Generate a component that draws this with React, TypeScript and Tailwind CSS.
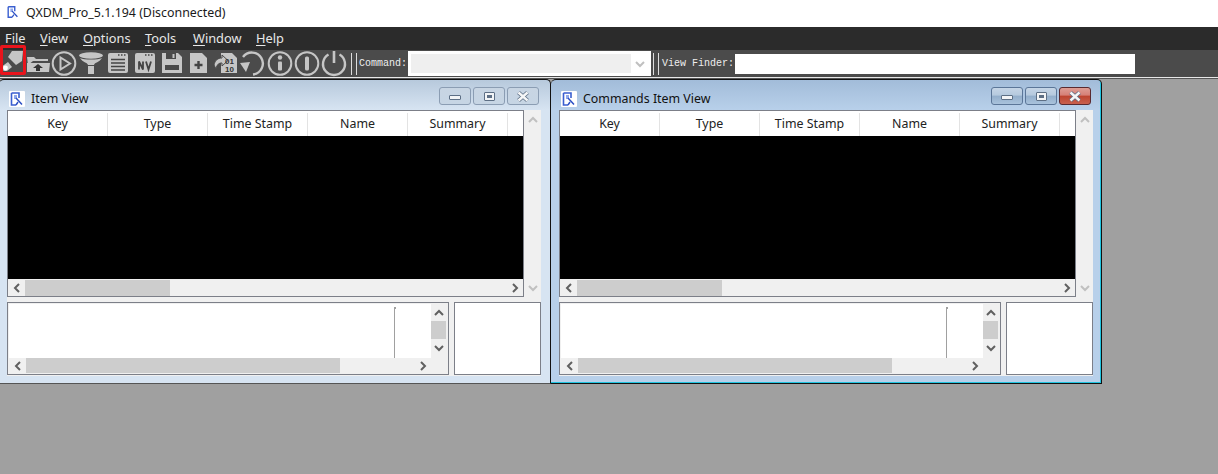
import React from "react";

const F = "[font-family:'Noto_Sans','Open_Sans',sans-serif]";

function AppLogo({ size = 16 }: { size?: number }) {
  return (
    <svg width={size} height={size} viewBox="0 0 16 16" className="shrink-0">
      <rect x="0" y="0" width="16" height="16" rx="1" fill="#ffffff" />
      <path d="M2.5 2 H10 V7 M2.5 2 V14 H7" fill="none" stroke="#3a5fd0" strokeWidth="1.6" />
      <path d="M5 4 H8 V8 H5 Z" fill="#8fa8ea" />
      <path d="M7 7 L13 13.5 M9 11 L7 14" fill="none" stroke="#2d50c4" strokeWidth="1.5" />
    </svg>
  );
}

const ic = "#c6c6c6";

function ToolIcon({ w, children }: { w: number; children: React.ReactNode }) {
  return (
    <svg width={w} height="27" viewBox={`0 0 ${w} 27`} className="shrink-0 overflow-visible">
      {children}
    </svg>
  );
}

function Toolbar() {
  return (
    <div className="flex items-center">
      <ToolIcon w={26}>
        <path d="M12 1 H23 L22 11 L16 15 L8 7 Z" fill={ic} />
        <path d="M8 12 L12 17 L7 21 H3.5 L2.5 16 Z" fill={ic} />
        <circle cx="5.5" cy="18" r="2.4" fill="#fff" />
      </ToolIcon>
      <ToolIcon w={25}>
        <path d="M1 7 H8 L10 9 H22 V11 H7 L2 15 Z" fill={ic} />
        <path d="M1 22 V13 H24 L23 22 Z" fill={ic} />
        <path d="M12 14 L17 18 H14 V21 H10 V18 H7 Z" fill="#333" />
      </ToolIcon>
      <ToolIcon w={27}>
        <circle cx="13" cy="13.5" r="11.3" fill="none" stroke={ic} strokeWidth="2" />
        <path d="M9.5 7.5 L19 13.5 L9.5 19.5 Z" fill="none" stroke={ic} strokeWidth="2" />
      </ToolIcon>
      <ToolIcon w={26}>
        <ellipse cx="13" cy="5.5" rx="12" ry="3.2" fill={ic} />
        <path d="M2 8 C5 13 9 12 10 15 H16 C17 12 21 13 24 8 C20 10 6 10 2 8 Z" fill={ic} />
        <path d="M10 16 H16 V24 H10 Z" fill={ic} />
      </ToolIcon>
      <ToolIcon w={28}>
        <rect x="4" y="3" width="20" height="20" rx="2" fill={ic} />
        <path d="M14 5 H15.5 M17 5 H18.5 M20 5 H21.5" stroke="#444" strokeWidth="1.5" />
        <path d="M7 9.5 H21 M7 13 H21 M7 16.5 H21 M7 20 H21" stroke="#444" strokeWidth="1.6" />
      </ToolIcon>
      <ToolIcon w={26}>
        <rect x="3" y="3" width="20" height="20" rx="2" fill={ic} />
        <path d="M13 5 H14.5 M16 5 H17.5 M19 5 H20.5" stroke="#444" strokeWidth="1.5" />
        <path d="M7 19.5 V11.5 L11 19.5 V11.5 M14 11.5 L16.5 19.5 L19 11.5" fill="none" stroke="#444" strokeWidth="1.8" />
      </ToolIcon>
      <ToolIcon w={28}>
        <path d="M4 3 H20 L24 7 V23 H4 Z" fill={ic} />
        <rect x="8" y="3" width="10" height="6" fill="#4a4a4a" />
        <rect x="14.5" y="4" width="2" height="4" fill={ic} />
        <rect x="7" y="15" width="14" height="5" fill="#4a4a4a" />
      </ToolIcon>
      <ToolIcon w={26}>
        <path d="M4 3 H16 L21 8 V23 H4 Z" fill={ic} />
        <path d="M12.5 11 V19 M8.5 15 H16.5" stroke="#444" strokeWidth="2.4" />
      </ToolIcon>
      <ToolIcon w={27}>
        <path d="M9 3 H20 L25 8 V23 H9 Z" fill={ic} />
        <path d="M2 15 C3 10 6 8 10 8 V5 L16 10.5 L10 16 V13 C7 13 5 14 4 19 Z" fill={ic} stroke="#4a4a4a" strokeWidth="1" />
        <text x="13" y="14" fontSize="8" fontWeight="700" fill="#333" fontFamily="'Liberation Sans',sans-serif">01</text>
        <text x="13" y="22" fontSize="8" fontWeight="700" fill="#333" fontFamily="'Liberation Sans',sans-serif">10</text>
      </ToolIcon>
      <ToolIcon w={27}>
        <path d="M4 7 A11 11 0 1 1 14 24.5" fill="none" stroke={ic} strokeWidth="2.4" />
        <path d="M1 13 L11 12 L7 22 Z" fill={ic} />
      </ToolIcon>
      <ToolIcon w={27}>
        <circle cx="14" cy="13.5" r="11.3" fill="none" stroke={ic} strokeWidth="2" />
        <circle cx="14" cy="7.5" r="2.2" fill={ic} />
        <rect x="12" y="11.5" width="4" height="9" rx="1" fill={ic} />
      </ToolIcon>
      <ToolIcon w={27}>
        <circle cx="14" cy="13.5" r="11.3" fill="none" stroke={ic} strokeWidth="2" />
        <rect x="12" y="6.5" width="4" height="14" rx="1.5" fill={ic} />
      </ToolIcon>
      <ToolIcon w={27}>
        <path d="M8.5 4.5 A11 11 0 1 0 19.5 4.5" fill="none" stroke={ic} strokeWidth="2.4" />
        <rect x="12.7" y="1" width="2.6" height="12" fill={ic} />
      </ToolIcon>
    </div>
  );
}

function Chevron({ d, disabled }: { d: "l" | "r" | "u" | "d"; disabled?: boolean }) {
  const p = {
    l: "M7 1 L3 5 L7 9",
    r: "M3 1 L7 5 L3 9",
    u: "M1 7 L5 3 L9 7",
    d: "M1 3 L5 7 L9 3",
  }[d];
  return (
    <svg width="10" height="10" viewBox="0 0 10 10">
      <path d={p} fill="none" stroke={disabled ? "#c0c0c0" : "#606060"} strokeWidth="2" />
    </svg>
  );
}

function WinBtn({ kind, active }: { kind: "min" | "max" | "close"; active: boolean }) {
  const red = kind === "close" && active;
  const bg = red
    ? "bg-[linear-gradient(#dd9d95_0%,#d68077_45%,#bd4430_50%,#c9614f_100%)] border-[#5a2a30]"
    : active
      ? "bg-[linear-gradient(#c5d5e6_0%,#b5c9de_45%,#93aecb_50%,#a9c2dc_100%)] border-[#5b7698]"
      : "bg-[linear-gradient(#c8d5e3,#c6d5e4)] border-[#8b9db3]";
  return (
    <div className={`w-[32px] h-[18px] rounded-[3px] border flex items-center justify-center ${bg}`}>
      {kind === "min" && <div className="w-[12px] h-[5px] mt-[3px] bg-[#f2f4f6] border border-[#5d6f85] rounded-[1px]" />}
      {kind === "max" && (
        <div className="w-[11px] h-[9px] bg-[#f2f4f6] border border-[#5d6f85] rounded-[1px] flex items-center justify-center">
          <div className="w-[5px] h-[3px] bg-[#5d6f85]" />
        </div>
      )}
      {kind === "close" && (
        <svg width="14" height="11" viewBox="0 0 14 11">
          <path d="M2.5 1.5 L11.5 9.5 M11.5 1.5 L2.5 9.5" stroke="#5d6f85" strokeWidth="4" />
          <path d="M2.5 1.5 L11.5 9.5 M11.5 1.5 L2.5 9.5" stroke="#f5f6f7" strokeWidth="2.4" />
        </svg>
      )}
    </div>
  );
}

function MdiWindow({
  title,
  active,
  width,
}: {
  title: string;
  active: boolean;
  width: string;
}) {
  const cols = ["Key", "Type", "Time Stamp", "Name", "Summary"];
  return (
    <div
      className={`${width} h-[305px] shrink-0 rounded-t-[5px] border-[#111] border-t border-r flex flex-col pl-[8px] pb-[7px] ${
        active
          ? "bg-[linear-gradient(#a2bcd9_0px,#b8d0ea_30px,#b8d0ea_100%)] border-b border-b-[#111] shadow-[inset_-1px_-1px_0_#20c4e0]"
          : "bg-[linear-gradient(#b7c9dc_0px,#d7e4f2_30px,#d7e4f2_100%)] border-b border-b-[#555]"
      }`}
    >
      <div className="h-[30px] w-[534px] flex items-center shrink-0">
        <div className="mt-[8px] ml-[2px] flex items-center">
          <AppLogo />
          <span className={`ml-[6px] text-[12.4px] leading-[16px] text-[#111] ${F}`}>{title}</span>
        </div>
        <div className="ml-auto mr-[2px] mt-[2px] flex gap-[2px]">
          <WinBtn kind="min" active={active} />
          <WinBtn kind="max" active={active} />
          <WinBtn kind="close" active={active} />
        </div>
      </div>
      <div className="flex-1 w-[534px] bg-[#f0f0f0] flex flex-col min-h-0">
        <div className="flex h-[187px] shrink-0">
          <div className="w-[517px] border border-[#7c7f88] flex flex-col">
            <div className={`h-[25px] pt-[2px] bg-white flex shrink-0 text-[12.4px] text-[#222] ${F}`}>
              {cols.map((c) => (
                <div key={c} className="w-[100px] border-r border-[#e3e3e3] flex items-center justify-center">
                  {c}
                </div>
              ))}
            </div>
            <div className="h-[143px] bg-black shrink-0" />
            <div className="flex-1 bg-[#f0f0f0] flex items-center">
              <div className="w-[17px] flex justify-center"><Chevron d="l" /></div>
              <div className="h-[16px] bg-[#cdcdcd] w-[145px]" />
              <div className="ml-auto w-[17px] flex justify-center"><Chevron d="r" /></div>
            </div>
          </div>
          <div className="flex-1 flex flex-col items-center justify-between pt-[5px] pb-[4px]">
            <Chevron d="u" disabled />
            <Chevron d="d" disabled />
          </div>
        </div>
        <div className="flex mt-[5px] h-[73px] gap-[5px]">
          <div className="w-[442px] bg-[#f0f0f0] border border-[#7c7f88] p-[1px] flex flex-col">
            <div className="flex flex-1 min-h-0">
              <div className="flex-1 bg-white relative">
                <div className="absolute left-[385px] top-[3px] bottom-0 w-px bg-[#a0a0a0]" />
                <div className="absolute left-[385px] top-[3px] w-[2px] h-[2px] bg-[#a0a0a0]" />
              </div>
              <div className="w-[15px] mr-[1px] flex flex-col items-center pt-[4px]">
                <Chevron d="u" />
                <div className="mt-[3px] h-[18px] w-[15px] bg-[#cdcdcd] shrink-0" />
                <div className="mt-[4px]"><Chevron d="d" /></div>
              </div>
            </div>
            <div className="h-[15px] flex items-center shrink-0">
              <div className="w-[17px] flex justify-center"><Chevron d="l" /></div>
              <div className="h-[15px] bg-[#cdcdcd] w-[314px]" />
              <div className="ml-auto mr-[19px]"><Chevron d="r" /></div>
            </div>
          </div>
          <div className="w-[87px] bg-white border border-[#7c7f88]" />
        </div>
      </div>
    </div>
  );
}

function Sep() {
  return <div className="w-px h-[22px] bg-[#ddd] shrink-0" />;
}

export default function App() {
  return (
    <div className="w-[1218px] h-[474px] overflow-hidden flex flex-col bg-[#a0a0a0]">
      <div className={`h-[27px] bg-white flex items-center pl-[6px] shrink-0 ${F}`}>
        <div className="-mt-[3px]"><AppLogo size={14} /></div>
        <span className="ml-[6px] text-[12.4px] text-[#1a1a1a]">QXDM_Pro_5.1.194 (Disconnected)</span>
      </div>
      <div className={`h-[23px] bg-[#2b2b2b] flex items-center shrink-0 text-[12.8px] text-[#e8e8e8] pl-[5px] ${F}`}>
        {[
          ["F", "ile", "w-[35px]"],
          ["V", "iew", "w-[43px]"],
          ["O", "ptions", "w-[62px]"],
          ["T", "ools", "w-[48px]"],
          ["W", "indow", "w-[63px]"],
          ["H", "elp", "w-[40px]"],
        ].map(([a, b, w]) => (
          <span key={a} className={w}>
            <span className="underline underline-offset-2">{a}</span>
            {b}
          </span>
        ))}
      </div>
      <div className="h-[27px] bg-[#4b4b4b] flex items-center shrink-0 relative">
        <Toolbar />
        <div className="absolute left-0 top-[-5px] w-[26px] h-[30px] border-[3px] border-[#e9141c] rounded-[2px]" />
        <div className="ml-[4px]"><Sep /></div>
        <div className="ml-[4px]"><Sep /></div>
        <span className="ml-[2px] w-[49px] text-[10px] text-[#eee] [font-family:'Liberation_Mono',monospace]">Command:</span>
        <div className="w-[243px] h-[25px] bg-[#efefef] border-[3px] border-white flex items-center justify-end">
          <div className="w-[17px] h-full bg-white flex items-center justify-center">
            <Chevron d="d" disabled />
          </div>
        </div>
        <div className="ml-[2px]"><Sep /></div>
        <div className="ml-[4px]"><Sep /></div>
        <span className="ml-[3px] w-[73px] text-[10px] text-[#eee] [font-family:'Liberation_Mono',monospace]">View Finder:</span>
        <div className="w-[400px] h-[20px] bg-white" />
      </div>
      <div className="h-px bg-[#e8e8e8] shrink-0" />
      <div className="h-px bg-[#555] shrink-0" />
      <div className="flex bg-[#a0a0a0]">
        <div className="-ml-px flex">
          <MdiWindow title="Item View" active={false} width="w-[552px]" />
          <MdiWindow title="Commands Item View" active width="w-[551px]" />
        </div>
      </div>
    </div>
  );
}
